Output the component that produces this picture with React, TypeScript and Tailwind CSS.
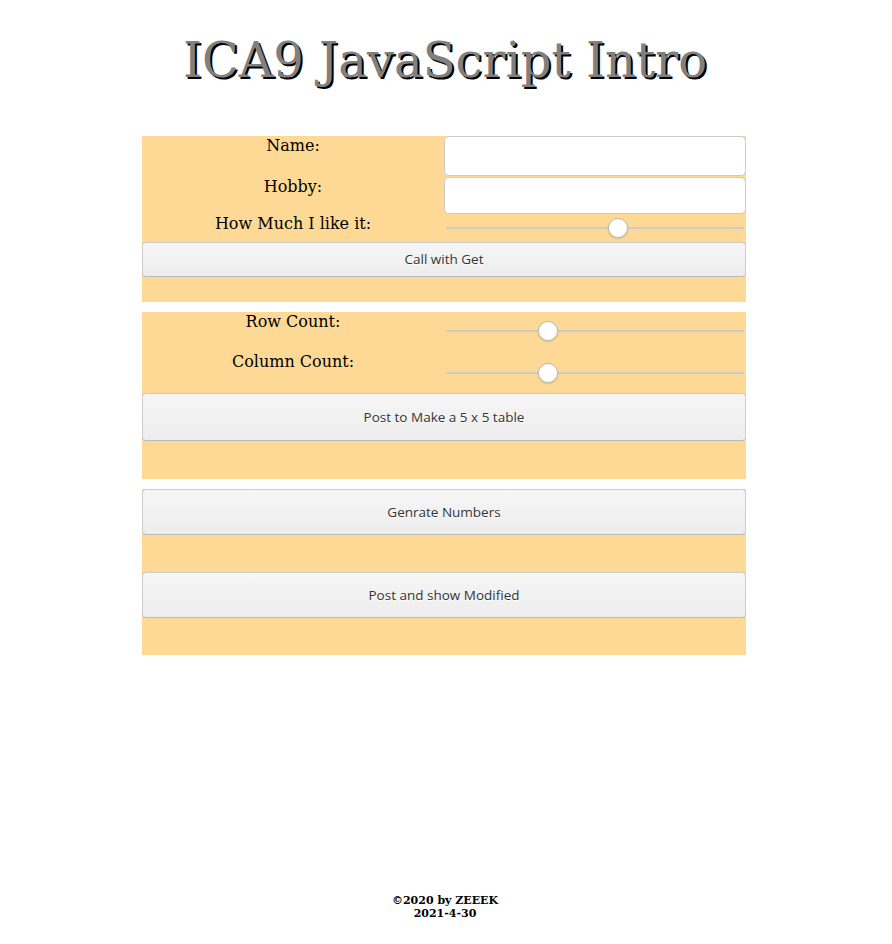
import React from 'react'

const serif = "font-['DejaVu_Serif',serif]"
const label = `${serif} text-[16px] leading-[20px] text-center text-black`

const Slider = ({ pos }: { pos: number }) => {
  return (
    <div className="relative h-[20px] mx-[2px]">
      <div className="absolute left-0 right-0 top-[9px] h-[2px] bg-[#cccccc]" />
      <div
        className="absolute top-0 w-[20px] h-[20px] rounded-full bg-white border border-[#bbbbbb] shadow-[0_1px_2px_rgba(0,0,0,0.15)]"
        style={{ left: pos - 10 }}
      />
    </div>
  )
}

const Btn = ({ text, h }: { text: string; h: string }) => {
  return (
    <button
      className={`w-full ${h} rounded-[4px] border border-[#cccccc] border-b-[#bbbbbb] bg-gradient-to-b from-[#f6f6f6] to-[#ededed] text-[13.5px] text-[#333333] font-['Open_Sans',sans-serif] [text-shadow:0_1px_0_#fff]`}
    >
      {text}
    </button>
  )
}

const App = () => {
  return (
    <div className="h-[944px] flex flex-col bg-white">
      <h1
        className={`${serif} text-[48px] leading-none text-center text-[#808080] [text-shadow:2px_2px_0_#000] pt-[36px] pr-[2px] h-[136px]`}
      >
        ICA9 JavaScript Intro
      </h1>

      <div className="w-[604px] ml-[142px] flex flex-col gap-[10px]">
        {/* first form */}
        <div className="bg-[#fdd995] pb-[25px]">
          <div className="grid grid-cols-2">
            <div className={label}>Name:</div>
            <input className="h-[40px] rounded-[5px] border border-[#cccccc] bg-white" />
            <div className={`${label} pt-[1px]`}>Hobby:</div>
            <input className="h-[37px] mt-[1px] rounded-[5px] border border-[#cccccc] bg-white" />
            <div className={label}>How Much I like it:</div>
            <div className="h-[28px] pt-[4px]">
              <Slider pos={172} />
            </div>
          </div>
          <Btn text="Call with Get" h="h-[35px]" />
        </div>

        {/* second form */}
        <div className="bg-[#fdd995] pb-[38px]">
          <div className="grid grid-cols-2">
            <div className={label}>Row Count:</div>
            <div className="h-[40px] pt-[9px]">
              <Slider pos={102} />
            </div>
            <div className={label}>Column Count:</div>
            <div className="h-[41px] pt-[11px]">
              <Slider pos={102} />
            </div>
          </div>
          <Btn text="Post to Make a 5 x 5 table" h="h-[48px]" />
        </div>

        {/* third form */}
        <div className="bg-[#fdd995] pb-[37px] flex flex-col gap-[37px]">
          <Btn text="Genrate Numbers" h="h-[46px]" />
          <Btn text="Post and show Modified" h="h-[46px]" />
        </div>
      </div>

      <footer className={`${serif} mt-auto pb-[24px] pr-[2px] text-center text-[11px] leading-[13px] font-bold text-black`}>
        <div>©2020 by ZEEEK</div>
        <div>2021-4-30</div>
      </footer>
    </div>
  )
}

export default App
